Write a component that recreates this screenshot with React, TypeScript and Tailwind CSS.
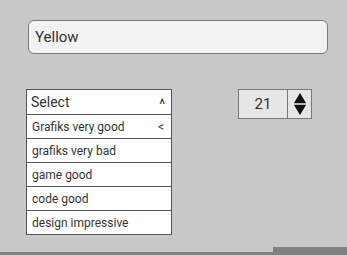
import { useState } from 'react'

const options = ['Grafiks very good', 'grafiks very bad', 'game good', 'code good', 'design impressive']

export default function App() {
  const [value] = useState(21)

  return (
    <div className="flex h-[255px] w-[347px] flex-col overflow-hidden bg-[#c8c8c8] font-['Roboto',sans-serif] text-[#333]">
      <div className="pl-[28px] pt-[20px]">
        <div className="flex h-[34px] w-[300px] items-center rounded-[6px] border border-[#7a7a7a] bg-[#f2f2f2] px-[6px] text-[15px]">
          Yellow
        </div>
      </div>

      <div className="mt-[35px] flex items-start">
        <div className="ml-[26px] w-[146px] border border-[#555] bg-white">
          <div className="flex h-[24px] items-center justify-between px-[4px] text-[14px]">
            <span>Select</span>
            <span className="pr-[2px] pt-[4px] text-[14px]">^</span>
          </div>
          {options.map((o, i) => (
            <div
              key={o}
              className="flex h-[24px] items-center justify-between border-t border-[#555] px-[5px] text-[12px]"
            >
              <span>{o}</span>
              {i === 0 && <span className="pr-[2px] text-[12px]">&lt;</span>}
            </div>
          ))}
        </div>

        <div className="ml-[66px] flex h-[30px] w-[74px] border border-[#777] bg-[#e6e6e6]">
          <div className="flex flex-1 items-center justify-center text-[15px]">{value}</div>
          <div className="flex w-[24px] items-center justify-center border-l border-[#777]">
            <svg width="14" height="24" viewBox="0 0 14 24">
              <polygon points="7,1 13,11 1,11" fill="#111" />
              <rect x="1" y="11.5" width="12" height="1" fill="#888" />
              <polygon points="1,13 13,13 7,23" fill="#111" />
            </svg>
          </div>
        </div>
      </div>

      <div className="flex-1" />
      <div className="flex items-end">
        <div className="h-[3px] w-[273px] bg-[#808080]" />
        <div className="h-[8px] flex-1 bg-[#808080]" />
      </div>
    </div>
  )
}
